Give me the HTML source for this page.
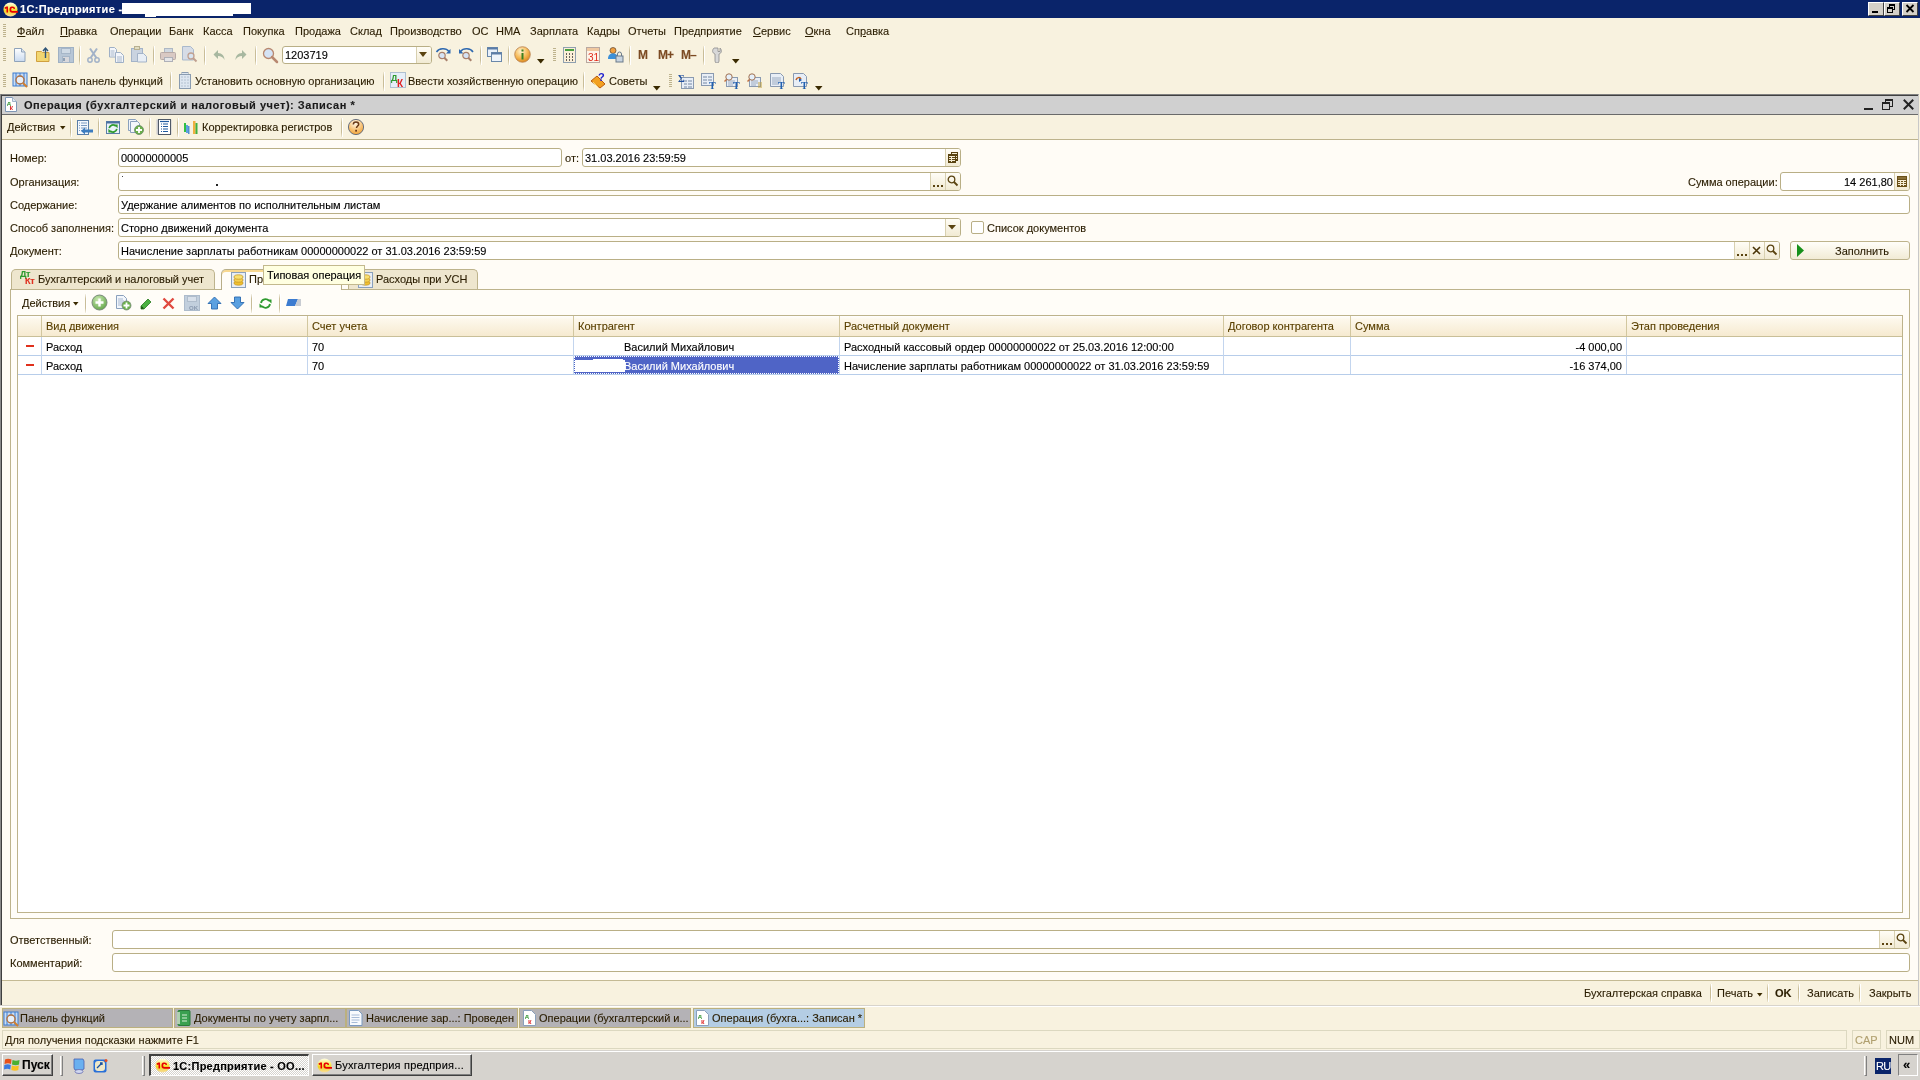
<!DOCTYPE html>
<html><head><meta charset="utf-8">
<style>
*{box-sizing:border-box;margin:0;padding:0}
html,body{width:1920px;height:1080px;overflow:hidden}
body{position:relative;background:#F8F2DF;font:11px/13px "Liberation Sans",sans-serif;color:#3A2A00}
.a{position:absolute}
.t{position:absolute;white-space:nowrap;font:11px/13px "Liberation Sans",sans-serif;color:#2A1D00;-webkit-text-stroke:0.12px currentColor}
.k{color:#000}
.b{font-weight:bold}
.fld{position:absolute;background:#fff;border:1px solid #B9AF86;border-radius:3px}
.btn{position:absolute;border-left:1px solid #D8D0B0;background:linear-gradient(#FFFDF6,#F1EAD3)}
.sep{position:absolute;width:2px;background:linear-gradient(rgba(200,188,150,0.2),#C9BD98 25%,#C9BD98 75%,rgba(200,188,150,0.2));border-right:1px solid #FFFFFF}
.grip{position:absolute;width:3px;background:repeating-linear-gradient(#BDB28C 0 1px,transparent 1px 2px)}
.ul{text-decoration:underline}
</style></head><body>
<div id="root" style="position:absolute;left:0;top:0;width:1920px;height:1080px;will-change:transform;overflow:hidden">

<!-- ============ TITLE BAR ============ -->
<div class="a" style="left:0;top:0;width:1920px;height:18px;background:#0A246A"></div>
<svg class="a" style="left:3px;top:2px" width="15" height="15"><defs><linearGradient id="g1c3" x1="0" y1="0" x2="0" y2="1"><stop offset="0" stop-color="#FFFDE8"/><stop offset="0.45" stop-color="#F8E850"/><stop offset="0.6" stop-color="#F2D020"/><stop offset="1" stop-color="#F8DDA0"/></linearGradient></defs><circle cx="7.5" cy="7.5" r="7" fill="url(#g1c3)"/><path d="M1.5 5.5l2-1h1.5v6H3.5V6.5l-1.5.5z" fill="#E80000"/><path d="M9.5 4.5c-2-0.5-3 0.8-3 3s1 3.2 3 3.2h5.5V9H9.5c-1 0-1.3-.7-1.3-1.5s.3-1.5 1.3-1.5c.8 0 1 .5 1 .9h1.5C12 5.2 11 4.6 9.5 4.5z" fill="#E80000"/></svg>
<div class="t b" style="left:20px;top:3px;color:#fff;letter-spacing:0.35px">1С:Предприятие -</div>
<div class="a" style="left:122px;top:3px;width:129px;height:11px;background:#fff"></div>
<div class="a" style="left:145px;top:13px;width:11px;height:4px;background:#fff"></div>
<div class="a" style="left:156px;top:13px;width:77px;height:3px;background:#fff"></div>
<div class="a" style="left:1868px;top:2px;width:16px;height:14px;background:#D4D0C8;border:1px solid;border-color:#fff #404040 #404040 #fff"></div>
<div class="a" style="left:1884px;top:2px;width:16px;height:14px;background:#D4D0C8;border:1px solid;border-color:#fff #404040 #404040 #fff"></div>
<div class="a" style="left:1902px;top:2px;width:16px;height:14px;background:#D4D0C8;border:1px solid;border-color:#fff #404040 #404040 #fff"></div>

<!-- title glyphs -->
<div class="a" style="left:1872px;top:11px;width:6px;height:2px;background:#000"></div>
<div class="a" style="left:1889px;top:4px;width:6px;height:6px;border:1px solid #000;border-top-width:2px"></div>
<div class="a" style="left:1887px;top:7px;width:6px;height:6px;border:1px solid #000;border-top-width:2px;background:#D4D0C8"></div>
<svg class="a" style="left:1905px;top:4px" width="10" height="9"><path d="M1.5 1l7 7M8.5 1l-7 7" stroke="#000" stroke-width="1.8"/></svg>
<!-- ============ MENU BAR ============ -->
<div class="grip" style="left:3px;top:24px;height:14px"></div>
<div class="t" style="left:17px;top:25px"><span class="ul">Ф</span>айл</div>
<div class="t" style="left:60px;top:25px"><span class="ul">П</span>равка</div>
<div class="t" style="left:110px;top:25px">Операции</div>
<div class="t" style="left:169px;top:25px">Банк</div>
<div class="t" style="left:203px;top:25px">Касса</div>
<div class="t" style="left:243px;top:25px">Покупка</div>
<div class="t" style="left:295px;top:25px">Продажа</div>
<div class="t" style="left:350px;top:25px">Склад</div>
<div class="t" style="left:390px;top:25px">Производство</div>
<div class="t" style="left:472px;top:25px">ОС</div>
<div class="t" style="left:496px;top:25px">НМА</div>
<div class="t" style="left:530px;top:25px">Зарплата</div>
<div class="t" style="left:587px;top:25px">Кадры</div>
<div class="t" style="left:628px;top:25px">Отчеты</div>
<div class="t" style="left:674px;top:25px">Предприятие</div>
<div class="t" style="left:753px;top:25px"><span class="ul">С</span>ервис</div>
<div class="t" style="left:805px;top:25px"><span class="ul">О</span>кна</div>
<div class="t" style="left:846px;top:25px">Сп<span class="ul">р</span>авка</div>

<!-- TOOLBAR1 -->
<div class="grip" style="left:3px;top:48px;height:14px"></div>
<svg class="a" style="left:13px;top:47px" width="16" height="16"><defs><linearGradient id="gdoc" x1="0" y1="0" x2="0" y2="1"><stop offset="0" stop-color="#fff"/><stop offset="1" stop-color="#C9DAF0"/></linearGradient></defs><path d="M1.5 1.5h7l3.5 3.5v9.5h-10.5z" fill="url(#gdoc)" stroke="#8FA3BA"/><path d="M8.5 1.5v3.5h3.5" fill="#DDE6F0" stroke="#8FA3BA"/></svg>
<svg class="a" style="left:35px;top:46px" width="17" height="17"><path d="M1.5 5.5h5l1 1h6.5v9h-12.5z" fill="#F2D670" stroke="#D0A040"/><path d="M10.5 12V2.5M8 5l2.5-3 2.5 3" fill="none" stroke="#2F5578" stroke-width="1.4"/></svg>
<svg class="a" style="left:58px;top:47px" width="16" height="16"><rect x="0.5" y="0.5" width="15" height="15" fill="#B7C6D6" stroke="#9FB1C4"/><rect x="3.5" y="1.5" width="9" height="5" fill="#CFDAE5" stroke="#A6B6C8"/><rect x="4.5" y="9.5" width="7" height="6" fill="#D8D8DC" stroke="#A6B6C8"/><rect x="5" y="11" width="2" height="3" fill="#8FA0B4"/></svg>
<div class="sep" style="left:79px;top:46px;height:19px"></div>
<svg class="a" style="left:87px;top:47px" width="13" height="16"><path d="M3 1.5L9.5 11M10 1.5L3.5 11" stroke="#A3B3C8" stroke-width="2" fill="none"/><circle cx="3" cy="13" r="2.2" fill="none" stroke="#A3B3C8" stroke-width="1.5"/><circle cx="10" cy="13" r="2.2" fill="none" stroke="#A3B3C8" stroke-width="1.5"/></svg>
<svg class="a" style="left:109px;top:47px" width="16" height="16"><path d="M0.5 0.5h5l2 2v7.5h-7z" fill="#F4F6FA" stroke="#9FB0C6"/><path d="M1.5 4h4M1.5 6h4M1.5 8h4" stroke="#A8B8CC"/><path d="M6.5 5.5h5l3 3v7h-8z" fill="#F4F6FA" stroke="#9FB0C6"/><path d="M8 10h5M8 12h5M8 14h5" stroke="#A8B8CC"/></svg>
<svg class="a" style="left:131px;top:46px" width="17" height="17"><rect x="0.5" y="2.5" width="11" height="13" fill="#C9D3E0" stroke="#A3B3C8"/><rect x="3.5" y="0.5" width="5" height="3" fill="#E0DCC0" stroke="#B8B090"/><path d="M6.5 7.5h6l3 3v5.5h-9z" fill="#E8EEF5" stroke="#A3B3C8"/></svg>
<div class="sep" style="left:153px;top:46px;height:19px"></div>
<svg class="a" style="left:160px;top:47px" width="17" height="16"><rect x="4.5" y="1.5" width="8" height="5" fill="#D0D8E0" stroke="#AEB8C4"/><rect x="0.5" y="5.5" width="15" height="7" rx="1" fill="#D9C9C3" stroke="#B8AAA6"/><rect x="4.5" y="10.5" width="8" height="4" fill="#E6E6E8" stroke="#AEB0B8"/></svg>
<svg class="a" style="left:182px;top:46px" width="17" height="17"><path d="M0.5 0.5h8l3 3v10.5h-11z" fill="#D6DCE6" stroke="#A9B9CC"/><circle cx="9" cy="10" r="3" fill="#D8E4F0" stroke="#C0A090" stroke-width="1.3"/><path d="M11 12l3.5 3.5" stroke="#C0A090" stroke-width="2"/></svg>
<div class="sep" style="left:204px;top:46px;height:19px"></div>
<svg class="a" style="left:213px;top:49px" width="13" height="12"><path d="M5 1L0.5 5.5L5 10V7c3 0 5 1 6.5 4c0-4-2.5-7-6.5-7z" fill="#A8B8A0"/></svg>
<svg class="a" style="left:234px;top:49px" width="13" height="12"><path d="M8 1L12.5 5.5L8 10V7c-3 0-5 1-6.5 4c0-4 2.5-7 6.5-7z" fill="#A8B8A0"/></svg>
<div class="sep" style="left:255px;top:46px;height:19px"></div>
<svg class="a" style="left:262px;top:47px" width="17" height="17"><circle cx="6.5" cy="6.5" r="5" fill="#D5E3F5" stroke="#B88870" stroke-width="1.3"/><path d="M10 10l5 5" stroke="#B88870" stroke-width="2.5" stroke-linecap="round"/></svg>
<div class="fld" style="left:282px;top:46px;width:150px;height:18px;border-radius:3px"></div>
<div class="btn" style="left:416px;top:47px;width:15px;height:16px;border-radius:0 2px 2px 0"></div>
<svg class="a" style="left:419px;top:52px" width="9" height="6"><path d="M0 0h8l-4 5z" fill="#5A4310"/></svg>
<div class="t k" style="left:285px;top:49px">1203719</div>
<svg class="a" style="left:435px;top:47px" width="17" height="16"><path d="M1.5 5C4 1 11 0.5 14 4.5" fill="none" stroke="#2F69B0" stroke-width="1.5"/><path d="M15.5 2v4.5h-4.5z" fill="#2F69B0"/><circle cx="7" cy="8.5" r="3.2" fill="#D5E3F5" stroke="#A8806C" stroke-width="1.2"/><path d="M9.3 10.8l3 3" stroke="#A8806C" stroke-width="2"/></svg>
<svg class="a" style="left:458px;top:47px" width="17" height="16"><path d="M15 5C12.5 1 5.5 0.5 2.5 4.5" fill="none" stroke="#2F69B0" stroke-width="1.5"/><path d="M1 2v4.5h4.5z" fill="#2F69B0"/><circle cx="8" cy="8.5" r="3.2" fill="#D5E3F5" stroke="#A8806C" stroke-width="1.2"/><path d="M10.3 10.8l3 3" stroke="#A8806C" stroke-width="2"/></svg>
<div class="sep" style="left:480px;top:46px;height:19px"></div>
<svg class="a" style="left:487px;top:47px" width="16" height="16"><rect x="0.5" y="0.5" width="10" height="9" fill="#E8F0FA" stroke="#6A88AA"/><rect x="0.5" y="0.5" width="10" height="2" fill="#5A7CA8"/><rect x="4.5" y="5.5" width="10" height="9" fill="#EEF4FB" stroke="#6A88AA"/><rect x="4.5" y="5.5" width="10" height="2" fill="#5A7CA8"/></svg>
<div class="sep" style="left:508px;top:46px;height:19px"></div>
<svg class="a" style="left:514px;top:46px" width="17" height="17"><defs><radialGradient id="ginf" cx="0.4" cy="0.3" r="0.7"><stop offset="0" stop-color="#FFF3D0"/><stop offset="0.6" stop-color="#F6B955"/><stop offset="1" stop-color="#DA8A20"/></radialGradient></defs><circle cx="8.5" cy="8.5" r="7.8" fill="url(#ginf)" stroke="#B88050" stroke-width="0.8"/><rect x="7.5" y="7" width="2" height="6.5" fill="#3A8020"/><rect x="7.5" y="3.5" width="2" height="2" fill="#3A8020"/></svg>
<svg class="a" style="left:537px;top:59px" width="8" height="5"><path d="M0 0h7.5l-3.75 4.5z" fill="#3A2A00"/></svg>
<div class="grip" style="left:553px;top:48px;height:14px"></div>
<svg class="a" style="left:563px;top:47px" width="13" height="16"><rect x="0.5" y="0.5" width="12" height="15" fill="#FBEFD8" stroke="#8FA0B0"/><rect x="2" y="2" width="9" height="2" fill="#49A040"/><path d="M3 7h1M6 7h1M9 7h1M3 10h1M6 10h1M9 10h1M3 13h1M6 13h1M9 13h1" stroke="#333" stroke-width="1.5"/></svg>
<svg class="a" style="left:586px;top:47px" width="14" height="16"><rect x="0.5" y="0.5" width="13" height="15" fill="#FDF4E8" stroke="#B8A8A0"/><rect x="1" y="1" width="12" height="3" fill="#F0C8A0"/><text x="2" y="14" font-family="Liberation Sans" font-size="10" fill="#E02818">31</text></svg>
<svg class="a" style="left:608px;top:47px" width="16" height="16"><circle cx="5" cy="3.5" r="3" fill="#F0A040" stroke="#3A2A20" stroke-width="0.6"/><path d="M0 12c0-4 2-5.5 5-5.5s5 1.5 5 5.5z" fill="#3C90D8"/><rect x="8" y="9" width="7" height="6" fill="#C8D4E0" stroke="#6A7A8A"/><path d="M9.5 9V7a2 2 0 0 1 4 0v2" fill="none" stroke="#6A7A8A"/></svg>
<div class="sep" style="left:629px;top:46px;height:19px"></div>
<div class="t b" style="left:638px;top:48px;color:#7B4A22;font-size:12px;line-height:14px">M</div>
<div class="t b" style="left:658px;top:48px;color:#7B4A22;font-size:12px;line-height:14px;letter-spacing:-1px">M+</div>
<div class="t b" style="left:681px;top:48px;color:#7B4A22;font-size:12px;line-height:14px;letter-spacing:-1px">M–</div>
<div class="sep" style="left:703px;top:46px;height:19px"></div>
<svg class="a" style="left:712px;top:47px" width="11" height="16"><path d="M2 1C0 3 0 6 3 7v7a2 2 0 0 0 4 0V7c3-1 3-4 1-6v3.5H6V1z" fill="#D8D8D8" stroke="#8A8A8A" stroke-width="0.8"/></svg>
<svg class="a" style="left:732px;top:59px" width="8" height="5"><path d="M0 0h7.5l-3.75 4.5z" fill="#3A2A00"/></svg>

<!-- TOOLBAR2 -->
<div class="grip" style="left:3px;top:74px;height:14px"></div>
<svg class="a" style="left:12px;top:72px" width="17" height="17"><rect x="1" y="1" width="14" height="13" fill="#C8DDF5" stroke="#3C7CD0"/><path d="M4 1v13M8 1v13M12 1v13" stroke="#3C7CD0"/><circle cx="8" cy="8" r="4" fill="#E6F0FA" stroke="#B07040" stroke-width="1.4"/><path d="M11 11l4 4" stroke="#D08030" stroke-width="2"/></svg>
<div class="t" style="left:30px;top:75px">Показать панель функций</div>
<div class="sep" style="left:170px;top:72px;height:19px"></div>
<svg class="a" style="left:179px;top:72px" width="12" height="17"><rect x="0.5" y="2.5" width="11" height="14" fill="#DDE6F0" stroke="#8A9CB0"/><rect x="3" y="0.5" width="6" height="2" fill="#DDE6F0" stroke="#8A9CB0"/><path d="M2.5 5h1M5.5 5h1M8.5 5h1M2.5 8h1M5.5 8h1M8.5 8h1M2.5 11h1M5.5 11h1M8.5 11h1M2.5 14h1M5.5 14h1M8.5 14h1" stroke="#8A9CB0"/></svg>
<div class="t" style="left:195px;top:75px">Установить основную организацию</div>
<div class="sep" style="left:383px;top:72px;height:19px"></div>
<svg class="a" style="left:390px;top:72px" width="16" height="16"><rect x="0.5" y="0.5" width="15" height="15" fill="#E6EEF8" stroke="#B0C0D0"/><text x="1" y="9" font-family="Liberation Sans" font-weight="bold" font-size="9" fill="#2E9A2E">Д</text><text x="7" y="15" font-family="Liberation Sans" font-weight="bold" font-size="10" fill="#E02020">К</text></svg>
<div class="t" style="left:408px;top:75px">Ввести хозяйственную операцию</div>
<div class="sep" style="left:583px;top:72px;height:19px"></div>
<svg class="a" style="left:590px;top:72px" width="17" height="17"><path d="M1 9l6-5 8 8-5 4z" fill="#F2A020" stroke="#B85A10"/><path d="M3 10l5 5" stroke="#F8D870"/><text x="8" y="9" font-family="Liberation Sans" font-weight="bold" font-size="11" fill="#2020D0">?</text></svg>
<div class="t" style="left:609px;top:75px">Советы</div>
<svg class="a" style="left:653px;top:86px" width="8" height="5"><path d="M0 0h7.5l-3.75 4.5z" fill="#3A2A00"/></svg>
<div class="grip" style="left:669px;top:74px;height:14px"></div>
<svg class="a" style="left:678px;top:73px" width="16" height="16"><rect x="3.5" y="4.5" width="12" height="11" fill="#E8EEF6" stroke="#8A9AB0"/><path d="M6 8h3M10 8h4M6 11h3M10 11h4M6 14h3M10 14h4" stroke="#9AAAC0" stroke-width="1.5"/><text x="0" y="9" font-family="Liberation Serif" font-weight="bold" font-size="10" fill="#2050A0">Σ</text></svg>
<svg class="a" style="left:701px;top:73px" width="16" height="16"><rect x="0.5" y="0.5" width="12" height="12" fill="#E8EEF6" stroke="#8A9AB0"/><path d="M2 4h4M7 4h4M2 7h4M7 7h4M2 10h4" stroke="#9AAAC0" stroke-width="1.5"/><text x="8" y="16" font-family="Liberation Serif" font-weight="bold" font-size="10" fill="#2060B0">T</text></svg>
<svg class="a" style="left:724px;top:73px" width="16" height="16"><rect x="2.5" y="4.5" width="11" height="9" fill="#E8EEF6" stroke="#8A9AB0"/><path d="M4 8h7M4 10h7M4 12h5" stroke="#9AAAC0"/><circle cx="5" cy="4" r="3.2" fill="#E6F0FA" stroke="#A07050"/><path d="M2.5 6.5L0.5 8.5" stroke="#C07040" stroke-width="1.5"/><text x="9" y="16" font-family="Liberation Serif" font-weight="bold" font-size="10" fill="#2060B0">T</text></svg>
<svg class="a" style="left:747px;top:73px" width="16" height="16"><rect x="2.5" y="4.5" width="11" height="9" fill="#E8EEF6" stroke="#8A9AB0"/><path d="M4 8h7M4 10h7M4 12h5" stroke="#9AAAC0"/><circle cx="5" cy="4" r="3.2" fill="#E6F0FA" stroke="#A07050"/><path d="M2.5 6.5L0.5 8.5" stroke="#C07040" stroke-width="1.5"/><path d="M11 10h4M11 12h4M11 14h4" stroke="#C0A040" stroke-width="1.2"/></svg>
<svg class="a" style="left:770px;top:73px" width="16" height="16"><path d="M0.5 0.5h10l3 3v10h-13z" fill="#E8EEF6" stroke="#8A9AB0"/><path d="M2 5h9M2 7h9M2 9h9M2 11h7" stroke="#9AAAC0"/><text x="8" y="16" font-family="Liberation Serif" font-weight="bold" font-size="10" fill="#2060B0">T</text></svg>
<svg class="a" style="left:793px;top:73px" width="16" height="16"><path d="M0.5 0.5h10l3 3v10h-13z" fill="#E8EEF6" stroke="#8A9AB0"/><path d="M3 7c1-3 4-3 5-1" fill="none" stroke="#C06020" stroke-width="1.5"/><path d="M6 9l3-2-3-2" fill="#2060B0"/><text x="8" y="16" font-family="Liberation Serif" font-weight="bold" font-size="10" fill="#2060B0">T</text></svg>
<svg class="a" style="left:815px;top:86px" width="8" height="5"><path d="M0 0h7.5l-3.75 4.5z" fill="#3A2A00"/></svg>


<!-- ============ DOC WINDOW ============ -->
<div class="a" style="left:0;top:94px;width:1919px;height:911px;background:#F8F2DF;border-left:2px solid #3F3F3F;border-top:1px solid #808080;box-shadow:inset 0 1px 0 #404040;border-right:1px solid #C8C8C8"></div>
<div class="a" style="left:0;top:94px;width:1px;height:911px;background:#8A8A8A"></div>
<div class="a" style="left:2px;top:96px;width:1916px;height:18px;background:#D0D0D0"></div>
<div class="a" style="left:2px;top:114px;width:1916px;height:1px;background:#6A6A6A"></div>
<div class="t b" style="left:24px;top:99px;color:#1A1A1A;letter-spacing:0.52px">Операция (бухгалтерский и налоговый учет): Записан *</div>
<div class="a" style="left:1864px;top:108px;width:9px;height:2px;background:#222"></div>
<div class="a" style="left:1885px;top:99px;width:8px;height:8px;border:1px solid #222;border-top-width:2px"></div>
<div class="a" style="left:1882px;top:102px;width:8px;height:8px;border:1px solid #222;border-top-width:2px;background:#D0D0D0"></div>
<svg class="a" style="left:1903px;top:99px" width="12" height="12"><path d="M1.5 1.5l8 8M9.5 1.5l-8 8" stroke="#222" stroke-width="2" stroke-linecap="square"/></svg>


<!-- doc toolbar -->
<div class="t" style="left:7px;top:121px">Действия</div>
<svg class="a" style="left:60px;top:126px" width="6" height="4"><path d="M0 0h5.5l-2.75 3.5z" fill="#3A2A00"/></svg>
<div class="sep" style="left:70px;top:118px;height:19px"></div>
<svg class="a" style="left:76px;top:120px" width="18" height="16"><rect x="1.5" y="0.5" width="11" height="14" fill="#F4F8FD" stroke="#5A7EA8"/><path d="M3 3h1M5 3h6M3 5.5h1M5 5.5h6M3 8h1M5 8h6M3 10.5h1M5 10.5h6" stroke="#7A9AC0"/><path d="M5 11l4-3.5v2h8v3H9v2z" fill="#3C7CC0"/></svg>
<div class="sep" style="left:98px;top:118px;height:19px"></div>
<svg class="a" style="left:106px;top:121px" width="14" height="13"><rect x="0.5" y="0.5" width="13" height="12" fill="#EAF2FA" stroke="#5A7EA8"/><rect x="0.5" y="0.5" width="13" height="2" fill="#4A70A0"/><path d="M3.2 7.2A3.8 3.8 0 0 1 9.8 5.2" fill="none" stroke="#2E9A2E" stroke-width="1.7"/><path d="M8 3.6h3.6v3.6z" fill="#2E9A2E"/><path d="M10.8 7.8A3.8 3.8 0 0 1 4.2 9.8" fill="none" stroke="#2E9A2E" stroke-width="1.7"/><path d="M6 11.4H2.4V7.8z" fill="#2E9A2E"/></svg>
<svg class="a" style="left:128px;top:119px" width="16" height="16"><path d="M0.5 0.5h7l2 2v9h-9z" fill="#F0F4FA" stroke="#8AA0BC"/><path d="M2.5 2.5h7l2 2v9h-9z" fill="#F4F7FB" stroke="#8AA0BC"/><circle cx="11" cy="11" r="4.5" fill="#6AB04A" stroke="#6A8A6A" stroke-width="0.8"/><path d="M11 8v6M8 11h6" stroke="#fff" stroke-width="1.8"/></svg>
<div class="sep" style="left:149px;top:118px;height:19px"></div>
<svg class="a" style="left:156px;top:119px" width="16" height="16"><rect x="0.5" y="0.5" width="15" height="15" fill="#C9C9D0"/><rect x="2.5" y="0.5" width="12" height="15" fill="#fff" stroke="#505A68"/><path d="M4 2.5h9" stroke="#1F5AA0" stroke-width="1.2"/><path d="M5 5h1M7 5h5M5 7.5h1M7 7.5h5M5 10h1M7 10h5M5 12.5h1M7 12.5h5" stroke="#1F5AA0" stroke-width="1.2"/></svg>
<div class="sep" style="left:177px;top:118px;height:19px"></div>
<svg class="a" style="left:184px;top:120px" width="15" height="15"><rect x="0" y="3" width="2" height="9" fill="#30C040"/><rect x="2" y="5" width="2" height="8" fill="#60A0E0"/><rect x="4" y="6" width="1.5" height="8" fill="#5090D0"/><rect x="9" y="1" width="2.5" height="13" fill="#F0B040"/><rect x="11.5" y="3" width="2" height="11" fill="#40B040"/></svg>
<div class="t" style="left:202px;top:121px">Корректировка регистров</div>
<div class="sep" style="left:341px;top:118px;height:19px"></div>
<svg class="a" style="left:347px;top:118px" width="18" height="18"><defs><radialGradient id="ghlp" cx="0.45" cy="0.25" r="0.8"><stop offset="0" stop-color="#FFF8EA"/><stop offset="0.6" stop-color="#F8C070"/><stop offset="1" stop-color="#F0A030"/></radialGradient></defs><circle cx="9" cy="9" r="7.6" fill="url(#ghlp)" stroke="#5A6478" stroke-width="0.9"/><path d="M6.3 6.5c0-1.8 1.3-2.6 2.7-2.6s2.7.9 2.7 2.4c0 1.6-2.2 2-2.2 3.8" fill="none" stroke="#6A3A18" stroke-width="1.5"/><rect x="8.2" y="11.8" width="1.8" height="1.8" fill="#6A3A18"/></svg>
<div class="a" style="left:2px;top:139px;width:1916px;height:1px;background:#BDB38C"></div>

<!-- form bg -->
<div class="a" style="left:2px;top:140px;width:1916px;height:840px;background:#FFFCF6"></div>
<div class="a" style="left:2px;top:980px;width:1916px;height:1px;background:#C4BA94"></div>

<!-- form fields -->
<div class="t" style="left:10px;top:152px">Номер:</div>
<div class="fld" style="left:118px;top:148px;width:444px;height:19px"></div>
<div class="t k" style="left:121px;top:152px">00000000005</div>
<div class="t" style="left:565px;top:152px">от:</div>
<div class="fld" style="left:582px;top:148px;width:379px;height:19px"></div>
<div class="t k" style="left:585px;top:152px">31.03.2016 23:59:59</div>

<div class="t" style="left:10px;top:176px">Организация:</div>
<div class="fld" style="left:118px;top:172px;width:843px;height:19px"></div>
<div class="t" style="left:1688px;top:176px">Сумма операции:</div>
<div class="fld" style="left:1780px;top:172px;width:130px;height:19px"></div>
<div class="t k" style="left:1844px;top:176px">14 261,80</div>

<div class="t" style="left:10px;top:199px">Содержание:</div>
<div class="fld" style="left:118px;top:195px;width:1792px;height:19px"></div>
<div class="t k" style="left:121px;top:199px">Удержание алиментов по исполнительным листам</div>

<div class="t" style="left:10px;top:222px">Способ заполнения:</div>
<div class="fld" style="left:118px;top:218px;width:843px;height:19px"></div>
<div class="t k" style="left:121px;top:222px">Сторно движений документа</div>
<div class="a" style="left:971px;top:221px;width:13px;height:13px;border:1px solid #B9AF86;border-radius:2px;background:#fff"></div>
<div class="t" style="left:987px;top:222px">Список документов</div>

<div class="t" style="left:10px;top:245px">Документ:</div>
<div class="fld" style="left:118px;top:241px;width:1662px;height:19px"></div>
<div class="t k" style="left:121px;top:245px">Начисление зарплаты работникам 00000000022 от 31.03.2016 23:59:59</div>

<!-- field buttons -->
<div class="btn" style="left:945px;top:149px;width:15px;height:17px;border-radius:0 2px 2px 0"></div>
<svg class="a" style="left:948px;top:152px" width="10" height="11" shape-rendering="crispEdges"><rect x="3" y="0" width="7" height="9" fill="#5A4310"/><rect x="0" y="2" width="8" height="9" fill="#5A4310"/><rect x="1" y="4" width="6" height="1" fill="#F4ECD4"/><rect x="1" y="6" width="6" height="1" fill="#F4ECD4"/><rect x="1" y="8" width="6" height="1" fill="#F4ECD4"/><rect x="4" y="1" width="5" height="1" fill="#F4ECD4"/><rect x="3" y="4" width="1" height="6" fill="#F4ECD4"/><rect x="8" y="4" width="1" height="1" fill="#F4ECD4"/><rect x="8" y="6" width="1" height="1" fill="#F4ECD4"/></svg>
<div class="btn" style="left:930px;top:173px;width:15px;height:17px"></div>
<div class="a" style="left:933px;top:185px;width:2px;height:2px;background:#5A4310;box-shadow:4px 0 #5A4310,8px 0 #5A4310"></div>
<div class="btn" style="left:945px;top:173px;width:15px;height:17px;border-radius:0 2px 2px 0"></div>
<svg class="a" style="left:947px;top:175px" width="12" height="12"><circle cx="4.5" cy="4.5" r="3.3" fill="none" stroke="#5A4310" stroke-width="1.3"/><path d="M7 7l3.5 3.5" stroke="#5A4310" stroke-width="1.8"/></svg>
<div class="a" style="left:122px;top:176px;width:1px;height:1px;background:#444"></div>
<div class="a" style="left:216px;top:184px;width:2px;height:2px;background:#222"></div>
<div class="btn" style="left:1894px;top:173px;width:15px;height:17px;border-radius:0 2px 2px 0"></div>
<svg class="a" style="left:1897px;top:176px" width="10" height="11" shape-rendering="crispEdges"><rect x="0" y="0" width="10" height="11" fill="#6A5018"/><rect x="1" y="1" width="8" height="2" fill="#8A7038"/><rect x="1" y="4" width="8" height="1" fill="#F4ECD4"/><rect x="1" y="6" width="8" height="1" fill="#F4ECD4"/><rect x="1" y="8" width="8" height="1" fill="#F4ECD4"/><rect x="3" y="4" width="1" height="6" fill="#F4ECD4"/><rect x="6" y="4" width="1" height="6" fill="#F4ECD4"/></svg>
<div class="btn" style="left:945px;top:219px;width:15px;height:17px;border-radius:0 2px 2px 0"></div>
<svg class="a" style="left:948px;top:225px" width="9" height="5"><path d="M0 0h8l-4 4.5z" fill="#5A4310"/></svg>
<div class="btn" style="left:1734px;top:242px;width:15px;height:17px"></div>
<div class="a" style="left:1737px;top:254px;width:2px;height:2px;background:#5A4310;box-shadow:4px 0 #5A4310,8px 0 #5A4310"></div>
<div class="btn" style="left:1749px;top:242px;width:15px;height:17px"></div>
<svg class="a" style="left:1752px;top:246px" width="9" height="9"><path d="M1 1l7 7M8 1l-7 7" stroke="#4A3508" stroke-width="1.6"/></svg>
<div class="btn" style="left:1764px;top:242px;width:15px;height:17px;border-radius:0 2px 2px 0"></div>
<svg class="a" style="left:1766px;top:244px" width="12" height="12"><circle cx="4.5" cy="4.5" r="3.3" fill="none" stroke="#5A4310" stroke-width="1.3"/><path d="M7 7l3.5 3.5" stroke="#5A4310" stroke-width="1.8"/></svg>
<div class="a" style="left:1790px;top:241px;width:120px;height:19px;border:1px solid #BDB38C;border-radius:3px;background:linear-gradient(#FFFEF9,#F2EBD5)"></div>
<svg class="a" style="left:1797px;top:244px" width="8" height="13"><path d="M0 0l7 6.5L0 13z" fill="#16901A"/></svg>
<div class="t" style="left:1835px;top:245px">Заполнить</div>

<!-- ============ TABS ============ -->
<div class="a" style="left:10px;top:289px;width:1900px;height:630px;background:#FFFDF8;border:1px solid #BDB38C"></div>
<div class="a" style="left:11px;top:269px;width:204px;height:20px;background:#EEE6CE;border:1px solid #BDB38C;border-bottom:none;border-radius:5px 5px 0 0"></div>
<div class="t" style="left:38px;top:273px">Бухгалтерский и налоговый учет</div>
<div class="a" style="left:348px;top:269px;width:130px;height:20px;background:#EEE6CE;border:1px solid #BDB38C;border-bottom:none;border-radius:5px 5px 0 0"></div>
<div class="t" style="left:376px;top:273px">Расходы при УСН</div>
<div class="a" style="left:221px;top:269px;width:121px;height:21px;background:#FFFDF8;border:1px solid #B8AE88;border-bottom:none;border-radius:5px 5px 0 0;box-shadow:inset 0 2px 0 #F8D890"></div>
<div class="t" style="left:249px;top:273px">Пр</div>

<!-- inner toolbar -->
<div class="t" style="left:22px;top:297px">Действия</div>
<!-- table toolbar icons -->
<svg class="a" style="left:73px;top:302px" width="6" height="4"><path d="M0 0h5.5l-2.75 3.5z" fill="#3A2A00"/></svg>
<div class="sep" style="left:85px;top:294px;height:19px"></div>
<svg class="a" style="left:91px;top:294px" width="17" height="17"><defs><radialGradient id="gpl" cx="0.4" cy="0.3" r="0.8"><stop offset="0" stop-color="#C8E8B0"/><stop offset="1" stop-color="#5AA040"/></radialGradient></defs><circle cx="8.5" cy="8.5" r="7.5" fill="url(#gpl)" stroke="#7A8A7A"/><path d="M8.5 4.5v8M4.5 8.5h8" stroke="#fff" stroke-width="2.4"/></svg>
<svg class="a" style="left:116px;top:295px" width="16" height="16"><path d="M0.5 0.5h7l3 3v10h-10z" fill="#F2F6FB" stroke="#8AA0BC"/><path d="M2 4h5M2 6h6M2 8h6M2 10h4" stroke="#A8B8D0"/><circle cx="10.5" cy="10.5" r="4.5" fill="#6AB04A" stroke="#7A8A7A" stroke-width="0.8"/><path d="M10.5 7.5v6M7.5 10.5h6" stroke="#fff" stroke-width="1.8"/></svg>
<svg class="a" style="left:140px;top:297px" width="13" height="13"><path d="M1 9l7-7 3 3-7 7H1z" fill="#4AB040" stroke="#2A7A20" stroke-width="0.8"/><path d="M1 12l3-0.5L1.5 9z" fill="#1A4A10"/></svg>
<svg class="a" style="left:162px;top:297px" width="13" height="13"><path d="M1.5 1.5l10 10M11.5 1.5l-10 10" stroke="#E04A40" stroke-width="2.4"/></svg>
<svg class="a" style="left:184px;top:295px" width="16" height="16"><rect x="0.5" y="0.5" width="15" height="15" fill="#C2CFDD" stroke="#AEBCCC"/><rect x="3.5" y="1.5" width="9" height="5" fill="#D8E0EA" stroke="#B0BDCC"/><text x="5" y="15" font-family="Liberation Sans" font-weight="bold" font-size="6" fill="#8A9AB0">OK</text></svg>
<svg class="a" style="left:207px;top:296px" width="15" height="14"><path d="M7.5 1L14 7.5h-3.5V13h-6V7.5H1z" fill="#5AA0E0" stroke="#2A6AB0" stroke-width="0.9"/></svg>
<svg class="a" style="left:230px;top:296px" width="15" height="14"><path d="M7.5 13L14 6.5h-3.5V1h-6v5.5H1z" fill="#5AA0E0" stroke="#2A6AB0" stroke-width="0.9"/></svg>
<div class="sep" style="left:251px;top:294px;height:19px"></div>
<svg class="a" style="left:258px;top:297px" width="15" height="13"><path d="M3 6a4.5 4.5 0 0 1 8-2" fill="none" stroke="#2E9A2E" stroke-width="1.8"/><path d="M9 2.5h4.5v4z" fill="#2E9A2E"/><path d="M12 7a4.5 4.5 0 0 1-8 2" fill="none" stroke="#2E9A2E" stroke-width="1.8"/><path d="M6 10.5H1.5v-4z" fill="#2E9A2E"/></svg>
<div class="sep" style="left:279px;top:294px;height:19px"></div>
<svg class="a" style="left:286px;top:298px" width="16" height="9"><path d="M2 1h10l-3 7H0z" fill="#3C7CD0"/><path d="M9 8l3-7h3v7z" fill="#C8CCD2"/></svg>
<!-- tab icons -->
<div class="t b" style="left:20px;top:269px;color:#2E9A2E;font-size:9px;line-height:10px;letter-spacing:-0.3px">Дт</div>
<div class="t b" style="left:25px;top:276px;color:#E03020;font-size:9px;line-height:10px;letter-spacing:-0.3px">Кт</div>
<svg class="a" style="left:231px;top:272px" width="16" height="16"><rect x="0.5" y="0.5" width="14" height="15" fill="#E8EEF6" stroke="#8AA0BC"/><ellipse cx="7.5" cy="11" rx="4.5" ry="2.2" fill="#F0C030" stroke="#C09020" stroke-width="0.7"/><ellipse cx="7.5" cy="8" rx="4.5" ry="2.2" fill="#F5D050" stroke="#C09020" stroke-width="0.7"/><ellipse cx="7.5" cy="5" rx="4.5" ry="2.2" fill="#F8E070" stroke="#C09020" stroke-width="0.7"/></svg>
<svg class="a" style="left:358px;top:272px" width="16" height="16"><rect x="0.5" y="0.5" width="14" height="15" fill="#E8EEF6" stroke="#8AA0BC"/><ellipse cx="7.5" cy="11" rx="4.5" ry="2.2" fill="#F0C030" stroke="#C09020" stroke-width="0.7"/><ellipse cx="7.5" cy="8" rx="4.5" ry="2.2" fill="#F5D050" stroke="#C09020" stroke-width="0.7"/><ellipse cx="7.5" cy="5" rx="4.5" ry="2.2" fill="#F8E070" stroke="#C09020" stroke-width="0.7"/></svg>


<!-- ============ TABLE ============ -->
<div class="a" style="left:17px;top:315px;width:1886px;height:598px;background:#fff;border:1px solid #BDB38C"></div>
<div class="a" style="left:18px;top:316px;width:1884px;height:20px;background:linear-gradient(#FFFFFF,#FDF8EC 15%,#F6EAD0)"></div>
<div class="a" style="left:18px;top:336px;width:1884px;height:1px;background:#C9BF98"></div>
<div class="a" style="left:41px;top:316px;width:1px;height:20px;background:#D2C79F"></div>
<div class="a" style="left:307px;top:316px;width:1px;height:20px;background:#D2C79F"></div>
<div class="a" style="left:573px;top:316px;width:1px;height:20px;background:#D2C79F"></div>
<div class="a" style="left:839px;top:316px;width:1px;height:20px;background:#D2C79F"></div>
<div class="a" style="left:1223px;top:316px;width:1px;height:20px;background:#D2C79F"></div>
<div class="a" style="left:1350px;top:316px;width:1px;height:20px;background:#D2C79F"></div>
<div class="a" style="left:1626px;top:316px;width:1px;height:20px;background:#D2C79F"></div>
<div class="t" style="left:46px;top:320px;color:#5A4000">Вид движения</div>
<div class="t" style="left:312px;top:320px;color:#5A4000">Счет учета</div>
<div class="t" style="left:578px;top:320px;color:#5A4000">Контрагент</div>
<div class="t" style="left:844px;top:320px;color:#5A4000">Расчетный документ</div>
<div class="t" style="left:1228px;top:320px;color:#5A4000">Договор контрагента</div>
<div class="t" style="left:1355px;top:320px;color:#5A4000">Сумма</div>
<div class="t" style="left:1631px;top:320px;color:#5A4000">Этап проведения</div>
<!-- row grid -->
<div class="a" style="left:18px;top:355px;width:1884px;height:1px;background:#B7CDEA"></div>
<div class="a" style="left:18px;top:374px;width:1884px;height:1px;background:#B7CDEA"></div>
<div class="a" style="left:41px;top:337px;width:1px;height:37px;background:#C3D5EE"></div>
<div class="a" style="left:307px;top:337px;width:1px;height:37px;background:#C3D5EE"></div>
<div class="a" style="left:573px;top:337px;width:1px;height:37px;background:#C3D5EE"></div>
<div class="a" style="left:839px;top:337px;width:1px;height:37px;background:#C3D5EE"></div>
<div class="a" style="left:1223px;top:337px;width:1px;height:37px;background:#C3D5EE"></div>
<div class="a" style="left:1350px;top:337px;width:1px;height:37px;background:#C3D5EE"></div>
<div class="a" style="left:1626px;top:337px;width:1px;height:37px;background:#C3D5EE"></div>
<!-- row 1 -->
<div class="a" style="left:26px;top:345px;width:8px;height:2px;background:#E0301C"></div>
<div class="t k" style="left:46px;top:341px">Расход</div>
<div class="t k" style="left:312px;top:341px">70</div>
<div class="t k" style="left:624px;top:341px">Василий Михайлович</div>
<div class="t k" style="left:844px;top:341px">Расходный кассовый ордер 00000000022 от 25.03.2016 12:00:00</div>
<div class="t k" style="left:1500px;top:341px;width:1122px;text-align:right;left:500px">-4 000,00</div>
<!-- row 2 -->
<div class="a" style="left:26px;top:364px;width:8px;height:2px;background:#E0301C"></div>
<div class="t k" style="left:46px;top:360px">Расход</div>
<div class="t k" style="left:312px;top:360px">70</div>
<div class="a" style="left:574px;top:356px;width:265px;height:18px;background:#4F64C6;outline:1px dotted #fff;outline-offset:-1px"></div>
<div class="a" style="left:575px;top:360px;width:50px;height:12px;background:#fff"></div>
<div class="a" style="left:593px;top:359px;width:30px;height:1px;background:#fff"></div>
<div class="t" style="left:624px;top:360px;color:#fff">Василий Михайлович</div>
<div class="t k" style="left:844px;top:360px">Начисление зарплаты работникам 00000000022 от 31.03.2016 23:59:59</div>
<div class="t k" style="left:500px;top:360px;width:1122px;text-align:right">-16 374,00</div>

<div class="t" style="left:10px;top:934px">Ответственный:</div>
<div class="fld" style="left:112px;top:930px;width:1798px;height:19px"></div>
<div class="btn" style="left:1879px;top:931px;width:15px;height:17px"></div>
<div class="a" style="left:1882px;top:943px;width:2px;height:2px;background:#5A4310;box-shadow:4px 0 #5A4310,8px 0 #5A4310"></div>
<div class="btn" style="left:1894px;top:931px;width:15px;height:17px;border-radius:0 2px 2px 0"></div>
<svg class="a" style="left:1896px;top:933px" width="12" height="12"><circle cx="4.5" cy="4.5" r="3.3" fill="none" stroke="#5A4310" stroke-width="1.3"/><path d="M7 7l3.5 3.5" stroke="#5A4310" stroke-width="1.8"/></svg>
<div class="t" style="left:10px;top:957px">Комментарий:</div>
<div class="fld" style="left:112px;top:953px;width:1798px;height:19px"></div>

<!-- bottom buttons -->
<div class="t" style="left:1584px;top:987px">Бухгалтерская справка</div>
<div class="sep" style="left:1710px;top:984px;height:18px"></div>
<div class="t" style="left:1717px;top:987px">Печать</div>
<svg class="a" style="left:1757px;top:993px" width="6" height="4"><path d="M0 0h5.5l-2.75 3.5z" fill="#3A2A00"/></svg>
<div class="sep" style="left:1767px;top:984px;height:18px"></div>
<div class="t b" style="left:1775px;top:987px;">OK</div>
<div class="sep" style="left:1798px;top:984px;height:18px"></div>
<div class="t" style="left:1807px;top:987px">Записать</div>
<div class="sep" style="left:1859px;top:984px;height:18px"></div>
<div class="t" style="left:1869px;top:987px">Закрыть</div>
<div class="a" style="left:0;top:1005px;width:1920px;height:1px;background:#D8D4CC"></div>

<!-- ============ WINDOW TABS ============ -->
<div class="a" style="left:0;top:1006px;width:1920px;height:1px;background:#FFFFFF"></div>
<div class="a" style="left:2px;top:1008px;width:171px;height:20px;background:#B4B2B6;border:1px solid #BBB07E"></div>
<div class="t" style="left:20px;top:1012px">Панель функций</div>
<div class="a" style="left:174px;top:1008px;width:172px;height:20px;background:#B4B2B6;border:1px solid #BBB07E"></div>
<div class="t" style="left:194px;top:1012px">Документы по учету зарпл...</div>
<div class="a" style="left:346px;top:1008px;width:172px;height:20px;background:#B4B2B6;border:1px solid #BBB07E"></div>
<div class="t" style="left:366px;top:1012px">Начисление зар...: Проведен</div>
<div class="a" style="left:519px;top:1008px;width:172px;height:20px;background:#B4B2B6;border:1px solid #BBB07E"></div>
<div class="t" style="left:539px;top:1012px">Операции (бухгалтерский и...</div>
<div class="a" style="left:693px;top:1008px;width:172px;height:20px;background:#B4CDE4;border:1px solid #BBB07E"></div>
<div class="t" style="left:712px;top:1012px">Операция (бухга...: Записан *</div>

<!-- ============ STATUS BAR ============ -->
<div class="a" style="left:2px;top:1030px;width:1845px;height:19px;border:1px solid #DCD8C0"></div>
<div class="t" style="left:5px;top:1034px">Для получения подсказки нажмите F1</div>
<div class="a" style="left:1852px;top:1030px;width:29px;height:19px;border:1px solid #DCD8C0"></div>
<div class="t" style="left:1855px;top:1034px;color:#B0A070">CAP</div>
<div class="a" style="left:1886px;top:1030px;width:34px;height:19px;border:1px solid #DCD8C0"></div>
<div class="t" style="left:1889px;top:1034px">NUM</div>

<!-- ============ TASKBAR ============ -->
<div class="a" style="left:0;top:1050px;width:1920px;height:30px;background:#D6D3CE"></div>
<div class="a" style="left:0;top:1051px;width:1920px;height:1px;background:#fff"></div>
<div class="a" style="left:2px;top:1054px;width:51px;height:22px;border:1px solid;border-color:#fff #404040 #404040 #fff;background:#D6D3CE;box-shadow:inset -1px -1px 0 #808080"></div>
<div class="t b k" style="left:22px;top:1058px;font-size:12px;line-height:14px">Пуск</div>
<div class="a" style="left:60px;top:1056px;width:3px;height:20px;border-left:1px solid #fff;border-right:1px solid #808080;border-bottom:1px solid #808080"></div>
<div class="a" style="left:142px;top:1056px;width:3px;height:20px;border-left:1px solid #fff;border-right:1px solid #808080;border-bottom:1px solid #808080"></div>
<div class="a" style="left:149px;top:1054px;width:160px;height:22px;border:2px solid;border-color:#404040 #fff #fff #404040;border-right-width:1px;border-bottom-width:1px;background:repeating-conic-gradient(#FFFFFF 0 25%,#D6D3CE 0 50%) 0 0/2px 2px"></div>
<div class="t b k" style="left:173px;top:1060px;letter-spacing:0.25px">1С:Предприятие - ОО...</div>
<div class="a" style="left:312px;top:1054px;width:160px;height:22px;border:1px solid;border-color:#fff #404040 #404040 #fff;background:#D6D3CE;box-shadow:inset -1px -1px 0 #808080"></div>
<div class="t k" style="left:335px;top:1059px;letter-spacing:0.2px">Бухгалтерия предприя...</div>
<div class="a" style="left:1864px;top:1056px;width:3px;height:20px;border-left:1px solid #fff;border-right:1px solid #808080;border-bottom:1px solid #808080"></div>
<div class="a" style="left:1875px;top:1058px;width:16px;height:16px;background:#0A246A"></div>
<div class="t" style="left:1876px;top:1060px;color:#fff;letter-spacing:-0.6px">RU</div>
<div class="a" style="left:1898px;top:1054px;width:20px;height:22px;border:1px solid;border-color:#808080 #fff #fff #808080"></div>
<div class="t b k" style="left:1903px;top:1058px;font-size:13px;line-height:14px">«</div>

<!-- window tab icons -->
<svg class="a" style="left:3px;top:1011px" width="17" height="16"><rect x="1" y="1" width="14" height="13" fill="#C8DDF5" stroke="#3C7CD0"/><path d="M4 1v13M8 1v13M12 1v13" stroke="#3C7CD0"/><circle cx="8" cy="8" r="4" fill="#E6F0FA" stroke="#B07040" stroke-width="1.4"/><path d="M11 11l4 4" stroke="#D08030" stroke-width="2"/></svg>
<svg class="a" style="left:177px;top:1010px" width="14" height="16"><rect x="1" y="0.5" width="12" height="15" rx="1" fill="#3AA050" stroke="#2A7A3A"/><rect x="0" y="2" width="3" height="12" fill="#B0D0B0"/><path d="M5 5h5M5 8h5M5 11h5" stroke="#D8F0D8" stroke-width="1.2"/></svg>
<svg class="a" style="left:349px;top:1010px" width="14" height="16"><path d="M0.5 0.5h9l3.5 3.5v11.5h-12.5z" fill="#F8FAFD" stroke="#7A9AC0"/><path d="M2.5 5h8M2.5 7.5h8M2.5 10h8M2.5 12.5h6" stroke="#A8BCD8"/></svg>
<svg class="a" style="left:523px;top:1010px" width="13" height="16"><path d="M0.5 0.5h8l4 4v11h-12z" fill="#fff" stroke="#8AA0BC"/><text x="2" y="8" font-family="Liberation Sans" font-weight="bold" font-size="6" fill="#3A9A3A">д</text><text x="5" y="14" font-family="Liberation Sans" font-weight="bold" font-size="7" fill="#E03030">к</text></svg>
<svg class="a" style="left:696px;top:1010px" width="13" height="16"><path d="M0.5 0.5h8l4 4v11h-12z" fill="#fff" stroke="#8AA0BC"/><text x="2" y="8" font-family="Liberation Sans" font-weight="bold" font-size="6" fill="#3A9A3A">д</text><text x="5" y="14" font-family="Liberation Sans" font-weight="bold" font-size="7" fill="#E03030">к</text></svg>
<!-- taskbar icons -->
<svg class="a" style="left:4px;top:1057px" width="16" height="14"><path d="M1 2.5c2-1 4-1 6.5 0L7 7C5 6 3 6 0.5 7z" fill="#E8501A"/><path d="M8.5 3c2.5 1 4.5 1 7 0L15 7.5c-2 1-4.5 1-7 0z" fill="#4AB030"/><path d="M0.3 8c2.5-1 4.5-1 6.5 0l-0.5 4.5C4.5 11.5 2 11.5 0 12.5z" fill="#3A7AE0"/><path d="M7.8 8.5c2.5 1 4.5 1 7 0l-0.5 4.5c-2 1-4.5 1-7 0z" fill="#F8C020"/></svg>
<svg class="a" style="left:73px;top:1058px" width="12" height="16"><path d="M1 1h9l1 2v8l-2 1H2L1 10z" fill="#6AB0F0" stroke="#4A60B0" stroke-width="0.8"/><ellipse cx="6" cy="13.5" rx="4" ry="2" fill="#D0D8F0" stroke="#6A70B0" stroke-width="0.8"/></svg>
<svg class="a" style="left:93px;top:1058px" width="15" height="15"><rect x="0.5" y="1.5" width="13" height="13" rx="2" fill="#2A70D8"/><rect x="2" y="3" width="10" height="10" rx="3" fill="#F0E8C8"/><path d="M4 10l5-5M7 5h2v2" stroke="#1A50A0" stroke-width="1.3" fill="none"/><circle cx="13" cy="2.5" r="1.5" fill="#E85020"/></svg>
<svg class="a" style="left:155px;top:1058px" width="15" height="15"><defs><linearGradient id="g1c155" x1="0" y1="0" x2="0" y2="1"><stop offset="0" stop-color="#FFFDE8"/><stop offset="0.45" stop-color="#F8E850"/><stop offset="0.6" stop-color="#F2D020"/><stop offset="1" stop-color="#F8DDA0"/></linearGradient></defs><circle cx="7.5" cy="7.5" r="7" fill="url(#g1c155)"/><path d="M1.5 5.5l2-1h1.5v6H3.5V6.5l-1.5.5z" fill="#E80000"/><path d="M9.5 4.5c-2-0.5-3 0.8-3 3s1 3.2 3 3.2h5.5V9H9.5c-1 0-1.3-.7-1.3-1.5s.3-1.5 1.3-1.5c.8 0 1 .5 1 .9h1.5C12 5.2 11 4.6 9.5 4.5z" fill="#E80000"/></svg>
<svg class="a" style="left:317px;top:1058px" width="15" height="15"><defs><linearGradient id="g1c317" x1="0" y1="0" x2="0" y2="1"><stop offset="0" stop-color="#FFFDE8"/><stop offset="0.45" stop-color="#F8E850"/><stop offset="0.6" stop-color="#F2D020"/><stop offset="1" stop-color="#F8DDA0"/></linearGradient></defs><circle cx="7.5" cy="7.5" r="7" fill="url(#g1c317)"/><path d="M1.5 5.5l2-1h1.5v6H3.5V6.5l-1.5.5z" fill="#E80000"/><path d="M9.5 4.5c-2-0.5-3 0.8-3 3s1 3.2 3 3.2h5.5V9H9.5c-1 0-1.3-.7-1.3-1.5s.3-1.5 1.3-1.5c.8 0 1 .5 1 .9h1.5C12 5.2 11 4.6 9.5 4.5z" fill="#E80000"/></svg>
<!-- doc title icon -->
<svg class="a" style="left:5px;top:97px" width="12" height="15"><path d="M0.5 0.5h7l4 4v10h-11z" fill="#fff" stroke="#7F97B5"/><path d="M7.5 0.5v4h4" fill="#E0E8F0" stroke="#9FB2C8"/><text x="2" y="8" font-family="Liberation Sans" font-weight="bold" font-size="6" fill="#3A9A3A">д</text><text x="4.5" y="13" font-family="Liberation Sans" font-weight="bold" font-size="7" fill="#E03030">к</text></svg>
<!-- tooltip -->
<div class="a" style="left:263px;top:265px;width:102px;height:20px;background:#FFFFE1;border:1px solid #C3B98E"></div>
<div class="t k" style="left:267px;top:269px">Типовая операция</div>
</div>
</body></html>
